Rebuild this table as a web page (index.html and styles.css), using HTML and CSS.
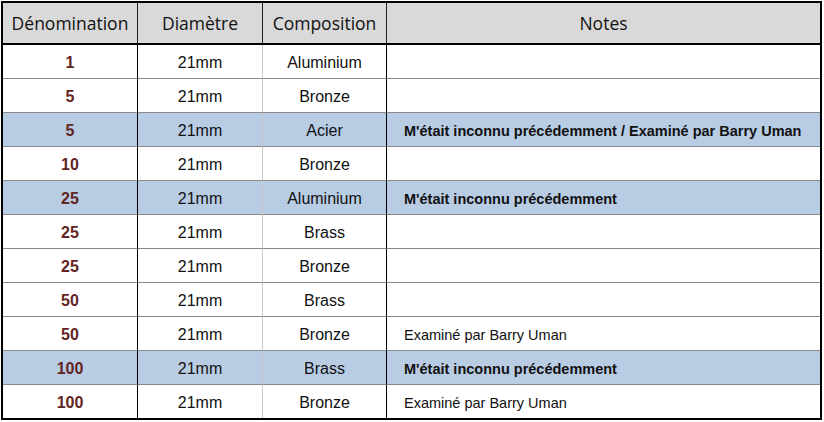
FILE: index.html
```html
<!DOCTYPE html>
<html lang="fr">
<head>
<meta charset="utf-8">
<title>Dénominations</title>
<link rel="stylesheet" href="styles.css">
</head>
<body>
<table class="coins">
  <colgroup>
    <col class="c-den"><col class="c-dia"><col class="c-comp"><col class="c-notes">
  </colgroup>
  <thead>
    <tr>
      <th class="den">Dénomination</th>
      <th class="dia">Diamètre</th>
      <th class="comp">Composition</th>
      <th class="notes">Notes</th>
    </tr>
  </thead>
  <tbody>
    <tr><td class="den">1</td><td class="dia">21mm</td><td class="comp">Aluminium</td><td class="notes"></td></tr>
    <tr><td class="den">5</td><td class="dia">21mm</td><td class="comp">Bronze</td><td class="notes"></td></tr>
    <tr class="hl"><td class="den">5</td><td class="dia">21mm</td><td class="comp">Acier</td><td class="notes">M'était inconnu précédemment / Examiné par Barry Uman</td></tr>
    <tr><td class="den">10</td><td class="dia">21mm</td><td class="comp">Bronze</td><td class="notes"></td></tr>
    <tr class="hl"><td class="den">25</td><td class="dia">21mm</td><td class="comp">Aluminium</td><td class="notes">M'était inconnu précédemment</td></tr>
    <tr><td class="den">25</td><td class="dia">21mm</td><td class="comp">Brass</td><td class="notes"></td></tr>
    <tr><td class="den">25</td><td class="dia">21mm</td><td class="comp">Bronze</td><td class="notes"></td></tr>
    <tr><td class="den">50</td><td class="dia">21mm</td><td class="comp">Brass</td><td class="notes"></td></tr>
    <tr><td class="den">50</td><td class="dia">21mm</td><td class="comp">Bronze</td><td class="notes">Examiné par Barry Uman</td></tr>
    <tr class="hl"><td class="den">100</td><td class="dia">21mm</td><td class="comp">Brass</td><td class="notes">M'était inconnu précédemment</td></tr>
    <tr class="last"><td class="den">100</td><td class="dia">21mm</td><td class="comp">Bronze</td><td class="notes">Examiné par Barry Uman</td></tr>
  </tbody>
</table>
</body>
</html>
```
FILE: styles.css
```css
html, body {
  margin: 0;
  padding: 0;
  background: #ffffff;
}

body {
  padding: 1px;
}

.coins {
  border-collapse: separate;
  border-spacing: 0;
  table-layout: fixed;
  width: 821px;
  border: 2px solid #000;
  font-family: "Liberation Sans", Arial, sans-serif;
  font-size: 16px;
  color: #111;
}

.c-den { width: 135px; }
.c-dia { width: 125px; }
.c-comp { width: 124px; }
.c-notes { width: auto; }

.coins th {
  height: 40px;
  padding: 0;
  background: #d9d9d9;
  font-family: "Open Sans", "Noto Sans", sans-serif;
  font-weight: 400;
  font-size: 17.5px;
  color: #111;
  text-align: center;
  border-bottom: 2px solid #000;
  border-right: 1px solid #222;
}

.coins th.notes,
.coins td.notes {
  border-right: none;
}

.coins td {
  height: 34px;
  padding: 2px 0 0;
  box-sizing: border-box;
  text-align: center;
  border-bottom: 1px solid #8a8a8a;
  border-right: 1px solid #000;
}

.coins td.dia {
  border-right: 1px solid #c8c8c8;
}

.coins td.den {
  font-weight: 700;
  color: #632523;
}

.coins td.notes {
  text-align: left;
  padding-left: 17px;
  font-size: 14.5px;
}

.coins tr.hl td {
  background: #b8cce4;
}

.coins tr.hl td.notes {
  font-weight: 700;
}

.coins tr.last td {
  height: 33px;
  border-bottom: none;
}
```
